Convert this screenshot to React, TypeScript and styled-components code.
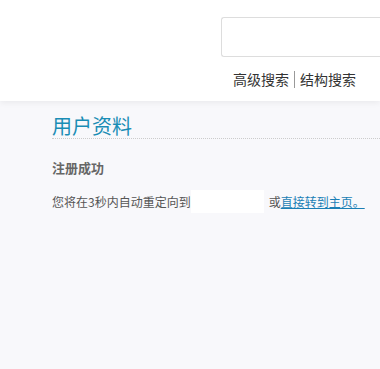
import React from "react";
import styled, { createGlobalStyle } from "styled-components";

const Global = createGlobalStyle`
  html, body { margin: 0; padding: 0; background: #f8f8fb; }
  body { font-family: "Noto Sans CJK SC", "Liberation Sans", sans-serif; overflow: hidden; }
`;

const Header = styled.header`
  height: 101px;
  background: #fff;
  box-shadow: 0 2px 6px rgba(0,0,0,0.06);
  position: relative;
  display: flex;
  justify-content: flex-end;
`;

const SearchArea = styled.div`
  width: 159px;
  padding-top: 17px;
  display: flex;
  flex-direction: column;
`;

const SearchBox = styled.div`
  height: 38px;
  border: 1px solid #ddd;
  border-right: none;
  border-radius: 3px 0 0 3px;
  background: #fff;
`;

const Links = styled.div`
  display: flex;
  align-items: center;
  margin-top: 12px;
  margin-left: 12px;
  font-size: 14px;
  line-height: 20px;
  color: #333;
`;

const Sep = styled.span`
  width: 1px;
  height: 17px;
  background: #999;
  margin: 0 5px;
`;

const Main = styled.main`
  padding: 13px 0 0 52px;
`;

const Title = styled.h2`
  margin: 0;
  font-size: 20px;
  line-height: 24px;
  font-weight: 400;
  color: #1a8db5;
  padding-bottom: 0;
  border-bottom: 1px dotted #ccc;
`;

const Sub = styled.h3`
  margin: 20px 0 0;
  font-size: 13px;
  line-height: 18px;
  font-weight: 700;
  color: #666;
`;

const Line = styled.p`
  margin: 13px 0 0;
  display: flex;
  align-items: center;
  font-size: 12px;
  line-height: 18px;
  color: #555;
`;

const Blank = styled.span`
  display: inline-block;
  width: 73px;
  height: 23px;
  background: #fff;
  margin: 0 5px 0 0;
`;

const Link = styled.a`
  color: #1a7fb5;
  text-decoration: underline;
  padding-right: 4px;
`;

export default function App() {
  return (
    <>
      <Global />
      <Header>
        <SearchArea>
          <SearchBox />
          <Links>
            <span>高级搜索</span>
            <Sep />
            <span>结构搜索</span>
          </Links>
        </SearchArea>
      </Header>
      <Main>
        <Title>用户资料</Title>
        <Sub>注册成功</Sub>
        <Line>
          您将在3秒内自动重定向到<Blank />或<Link href="#">直接转到主页。</Link>
        </Line>
      </Main>
    </>
  );
}
